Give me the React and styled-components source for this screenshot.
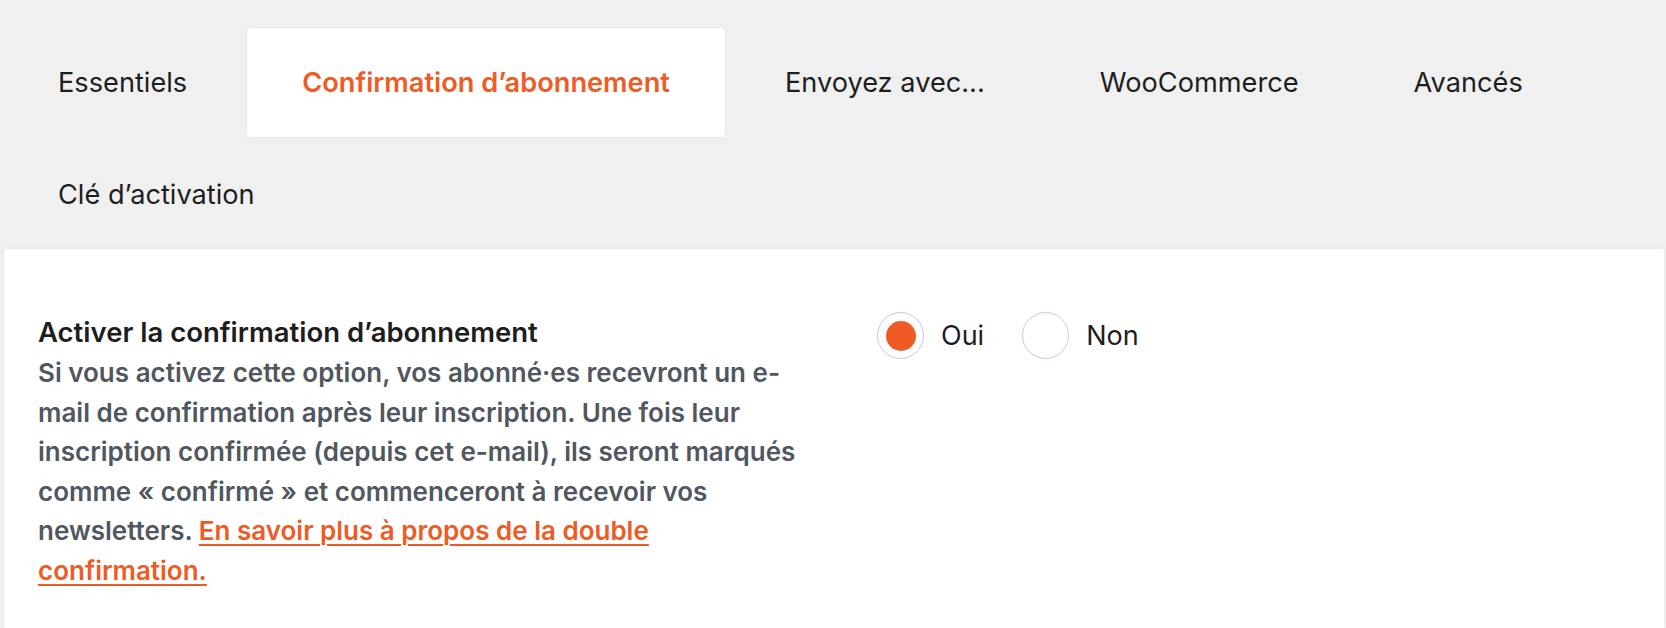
import React, { useState } from "react";
import styled, { createGlobalStyle } from "styled-components";

const GlobalStyle = createGlobalStyle`
  html, body {
    margin: 0;
    padding: 0;
    background: #f0f0f1;
  }
  body {
    font-family: Inter, "Noto Sans", sans-serif;
    -webkit-font-smoothing: antialiased;
  }
`;

const ORANGE = "#ef5b25";

const Page = styled.div`
  width: 1666px;
  height: 628px;
  display: flex;
  flex-direction: column;
  background: #f0f0f1;
  overflow: hidden;
`;

const TabList = styled.nav`
  display: flex;
  flex-wrap: wrap;
  gap: 3px 5px;
  padding: 28px 0 0 3px;
`;

const Tab = styled.button`
  height: 109px;
  padding: 0 55px;
  display: flex;
  align-items: center;
  border: none;
  border-radius: 4px;
  background: ${({ $active }) => ($active ? "#ffffff" : "transparent")};
  box-shadow: ${({ $active }) =>
    $active ? "0 0 0 1px rgba(0, 0, 0, 0.03)" : "none"};
  color: ${({ $active }) => ($active ? ORANGE : "#1e1e1e")};
  font-family: inherit;
  font-size: 27.2px;
  font-weight: ${({ $active }) => ($active ? 600 : 400)};
  white-space: nowrap;
  cursor: pointer;
`;

const Panel = styled.section`
  flex: 1;
  margin: 0 2px 0 4px;
  background: #ffffff;
  box-shadow: 0 -2px 6px rgba(0, 0, 0, 0.03), -1px 0 0 #ececec;
  padding: 63px 34px 0;
`;

const SettingRow = styled.div`
  display: grid;
  grid-template-columns: 805px 1fr;
  column-gap: 34px;
  align-items: start;
`;

const Label = styled.div`
  max-width: 775px;
`;

const Heading = styled.h3`
  margin: 0 0 1px;
  font-size: 27.5px;
  line-height: 40px;
  font-weight: 600;
  color: #1e1e1e;
`;

const Description = styled.p`
  margin: 0;
  font-size: 26px;
  line-height: 39.5px;
  font-weight: 600;
  color: #50575e;

  a {
    color: ${ORANGE};
    text-decoration: underline;
    text-underline-offset: 4px;
    text-decoration-thickness: 2px;
  }
`;

const Options = styled.div`
  display: flex;
  align-items: center;
  gap: 38px;
`;

const Option = styled.label`
  display: flex;
  align-items: center;
  gap: 17px;
  font-size: 27px;
  color: #1e1e1e;
  cursor: pointer;
`;

const Radio = styled.span`
  width: 47px;
  height: 47px;
  box-sizing: border-box;
  border-radius: 50%;
  border: 1.5px solid #c6c7e6;
  background: #ffffff;
  display: flex;
  align-items: center;
  justify-content: center;

  &::after {
    content: "";
    width: 30px;
    height: 30px;
    border-radius: 50%;
    background: ${({ $checked }) => ($checked ? ORANGE : "transparent")};
  }
`;

const tabs = [
  "Essentiels",
  "Confirmation d’abonnement",
  "Envoyez avec...",
  "WooCommerce",
  "Avancés",
  "Clé d’activation",
];

export default function App() {
  const [active, setActive] = useState(1);
  const [enabled, setEnabled] = useState(true);

  return (
    <Page>
      <GlobalStyle />
      <TabList>
        {tabs.map((t, i) => (
          <Tab key={t} $active={i === active} onClick={() => setActive(i)}>
            {t}
          </Tab>
        ))}
      </TabList>
      <Panel>
        <SettingRow>
          <Label>
            <Heading>Activer la confirmation d’abonnement</Heading>
            <Description>
              Si vous activez cette option, vos abonné·es recevront un e-mail de
              confirmation après leur inscription. Une fois leur inscription
              confirmée (depuis cet e-mail), ils seront marqués comme « confirmé »
              et commenceront à recevoir vos newsletters.{" "}
              <a href="#">En savoir plus à propos de la double confirmation.</a>
            </Description>
          </Label>
          <Options>
            <Option onClick={() => setEnabled(true)}>
              <Radio $checked={enabled} />
              Oui
            </Option>
            <Option onClick={() => setEnabled(false)}>
              <Radio $checked={!enabled} />
              Non
            </Option>
          </Options>
        </SettingRow>
      </Panel>
    </Page>
  );
}
